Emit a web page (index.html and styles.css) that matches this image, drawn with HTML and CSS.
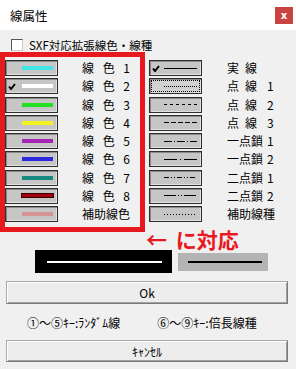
FILE: index.html
```html
<!DOCTYPE html>
<html lang="ja">
  <head>
    <meta charset="utf-8" />
    <title>線属性</title>
    <link rel="stylesheet" href="styles.css">
  </head>
  <body>
    <div id="titlebar">
      <span class="title">線属性</span>
      <button class="close">x</button>
    </div>
    <div id="dialog">
      <label class="sxf"><span class="checkbox"></span>SXF対応拡張線色・線種</label>

      <div class="lists">
        <div class="redbox">
          <div class="list">
            <div class="row"><span class="swatch"><i class="line" style="background:#40e6e6"></i></span><span class="label">線 色 1</span></div>
            <div class="row"><span class="swatch"><svg class="check" width="8" height="7" viewBox="0 0 8 7"><path d="M1 3.5 L3 6 L7 1" /></svg><i class="line" style="background:#ffffff"></i></span><span class="label">線 色 2</span></div>
            <div class="row"><span class="swatch"><i class="line" style="background:#22e022"></i></span><span class="label">線 色 3</span></div>
            <div class="row"><span class="swatch"><i class="line" style="background:#f2f222"></i></span><span class="label">線 色 4</span></div>
            <div class="row"><span class="swatch"><i class="line" style="background:#a424b4"></i></span><span class="label">線 色 5</span></div>
            <div class="row"><span class="swatch"><i class="line" style="background:#2a2ade"></i></span><span class="label">線 色 6</span></div>
            <div class="row"><span class="swatch"><i class="line" style="background:#168a80"></i></span><span class="label">線 色 7</span></div>
            <div class="row"><span class="swatch"><i class="line dark" style="background:#a00010"></i></span><span class="label">線 色 8</span></div>
            <div class="row"><span class="swatch"><i class="line" style="background:#d49494"></i></span><span class="label">補助線色</span></div>
          </div>
        </div>

        <div class="list types">
          <div class="row"><span class="swatch"><svg class="check" width="8" height="7" viewBox="0 0 8 7"><path d="M1 3.5 L3 6 L7 1" /></svg><svg class="dash" width="33" height="3"><line x1="0" y1="1.5" x2="33" y2="1.5" /></svg></span><span class="tlabel"><b>実</b>線</span></div>
          <div class="row"><span class="swatch focus"><svg class="dash" width="33" height="3"><line x1="0" y1="1.5" x2="33" y2="1.5" stroke-dasharray="1 1" /></svg></span><span class="tlabel"><b>点</b><b class="w2">線</b>1</span></div>
          <div class="row"><span class="swatch"><svg class="dash" width="33" height="3"><line x1="0" y1="1.5" x2="33" y2="1.5" stroke-dasharray="3 3" /></svg></span><span class="tlabel"><b>点</b><b class="w2">線</b>2</span></div>
          <div class="row"><span class="swatch"><svg class="dash" width="33" height="3"><line x1="0" y1="1.5" x2="33" y2="1.5" stroke-dasharray="5 2" /></svg></span><span class="tlabel"><b>点</b><b class="w2">線</b>3</span></div>
          <div class="row"><span class="swatch"><svg class="dash" width="33" height="3"><line x1="0" y1="1.5" x2="33" y2="1.5" stroke-dasharray="8 2 1 2" /></svg></span><span class="tlabel"><b class="w3">一点鎖</b>1</span></div>
          <div class="row"><span class="swatch"><svg class="dash" width="33" height="3"><line x1="0" y1="1.5" x2="33" y2="1.5" stroke-dasharray="13 3 1 3" /></svg></span><span class="tlabel"><b class="w3">一点鎖</b>2</span></div>
          <div class="row"><span class="swatch"><svg class="dash" width="33" height="3"><line x1="0" y1="1.5" x2="33" y2="1.5" stroke-dasharray="5 2 1 2 1 2" /></svg></span><span class="tlabel"><b class="w3">二点鎖</b>1</span></div>
          <div class="row"><span class="swatch"><svg class="dash" width="33" height="3"><line x1="0" y1="1.5" x2="33" y2="1.5" stroke-dasharray="12 2 1 2 1 2" /></svg></span><span class="tlabel"><b class="w3">二点鎖</b>2</span></div>
          <div class="row"><span class="swatch"><svg class="dash" width="33" height="3"><line x1="0" y1="1.5" x2="33" y2="1.5" stroke-dasharray="1 2" /></svg></span><span class="tlabel">補助線種</span></div>
        </div>
      </div>

      <div class="note">← に対応</div>

      <div class="preview">
        <div class="sample black"><i></i></div>
        <div class="sample gray"><i></i></div>
      </div>

      <button class="wide ok">Ok</button>
      <div class="hint"><span>①～⑤ｷｰ:ﾗﾝﾀﾞﾑ線</span><span>⑥～⑨ｷｰ:倍長線種</span></div>
      <button class="wide cancel">ｷｬﾝｾﾙ</button>
    </div>
  </body>
</html>
```

FILE: styles.css
```css
html,
body {
  margin: 0;
  padding: 0;
}

body {
  width: 296px;
  height: 369px;
  overflow: hidden;
  font-family: "Noto Sans CJK JP", "Noto Sans", sans-serif;
  font-size: 12px;
  color: #000;
  background: #f0f0f0;
}

#titlebar {
  height: 30px;
  display: flex;
  align-items: center;
  padding: 0 3px 0 10px;
  background: #fff;
  box-sizing: border-box;
}

#titlebar .title {
  font-size: 12.5px;
}

#titlebar .close {
  margin-left: auto;
  width: 18px;
  height: 17px;
  padding: 0;
  border: 0;
  background: #c94343;
  color: #fff;
  font: bold 10px "DejaVu Sans", sans-serif;
  line-height: 17px;
}

#dialog {
  position: relative;
  height: 339px;
  background: #f0f0f0;
}

.sxf {
  display: flex;
  align-items: center;
  height: 14px;
  padding: 8px 0 0 11px;
  font-size: 11.5px;
  line-height: 14px;
}

.checkbox {
  width: 10px;
  height: 10px;
  margin-right: 6px;
  background: #fff;
  border: 1px solid #555;
  border-right-color: #ccc;
  border-bottom-color: #ccc;
}

.lists {
  display: flex;
  margin-top: 0;
}

.redbox {
  width: 135px;
  padding: 3px 0 5px;
  border: 5px solid #e8191e;
}

.list {
  display: grid;
  grid-auto-rows: 16px;
  row-gap: 2.25px;
}

.types {
  margin-left: 4px;
  padding-top: 8px;
}

.row {
  display: flex;
  align-items: center;
}

.swatch {
  box-sizing: border-box;
  width: 53px;
  height: 16px;
  display: flex;
  align-items: center;
  justify-content: flex-end;
  padding: 0 4px 0 2px;
  background: #c6c6c6;
  border: 1px solid #2e2e2e;
  box-shadow: inset 1px 1px #8a8a8a, inset -1px -1px #e0e0e0;
}

.swatch .check {
  margin-right: auto;
  fill: none;
  stroke: #000;
  stroke-width: 2;
}

.swatch .line {
  width: 31px;
  height: 4px;
}

.swatch .line.dark {
  box-shadow: 0 0 0 1px #3a0000;
  height: 3px;
}

.swatch .dash {
  display: block;
  stroke: #000;
  stroke-width: 1;
}

.swatch.focus {
  background: #d2d2d2;
  outline: 1px dotted #000;
  outline-offset: -3px;
}

.label {
  width: 48px;
  margin-left: 24px;
  text-align: justify;
  text-align-last: justify;
  line-height: 16px;
}

.tlabel {
  display: flex;
  margin-left: 25px;
  line-height: 16px;
}

.tlabel b {
  font-weight: normal;
  width: 18px;
}

.tlabel b.w2 {
  width: 22px;
}

.tlabel b.w3 {
  width: 40px;
}

.note {
  position: absolute;
  left: 146px;
  top: 197px;
  color: #e8191e;
  font-size: 21px;
  font-weight: bold;
  line-height: 24px;
  word-spacing: 4px;
}

.preview {
  display: flex;
  align-items: flex-start;
  margin-top: 18px;
  padding-left: 35px;
}

.sample {
  display: flex;
  align-items: center;
  box-sizing: border-box;
}

.sample.black {
  width: 137px;
  height: 23px;
  padding: 0 10px 0 12px;
  background: #000;
}

.sample.black i {
  flex: 1;
  height: 2px;
  background: #fff;
}

.sample.gray {
  width: 90px;
  height: 18px;
  margin: 3px 0 0 6px;
  padding: 0 6px 0 10px;
  background: #b4b4b4;
}

.sample.gray i {
  flex: 1;
  height: 2px;
  background: #000;
}

.wide {
  display: block;
  box-sizing: border-box;
  width: 282px;
  margin: 0 6px;
  padding: 0;
  background: #ededed;
  border: 1px solid #7a7a7a;
  border-top-color: #a8a8a8;
  border-left-color: #a8a8a8;
  box-shadow: inset 1px 1px #fff, inset -1px -1px #a0a0a0;
  font-family: "Noto Sans CJK JP", sans-serif;
  font-size: 12px;
  color: #000;
}

.ok {
  height: 23px;
  margin-top: 8px;
}

.cancel {
  height: 22px;
}

.hint {
  display: flex;
  align-items: center;
  height: 36px;
  padding-left: 27px;
  gap: 37px;
}
```
